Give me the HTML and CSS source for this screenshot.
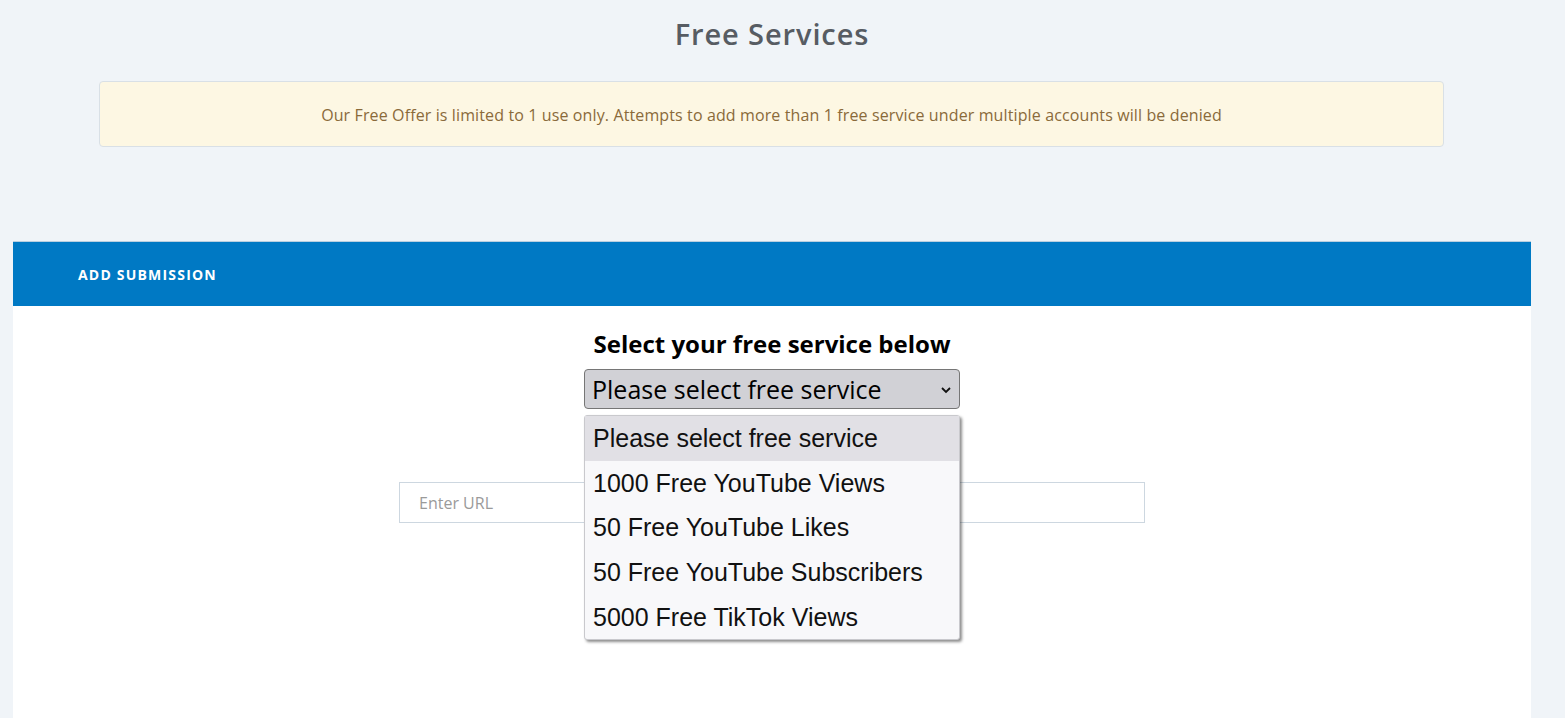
FILE: index.html
```html
<!DOCTYPE html>
<html lang="en">
<head>
    <meta charset="UTF-8">
    <meta name="viewport" content="width=device-width, initial-scale=1.0">
    <title>Free Services</title>
    <link rel="stylesheet" href="styles.css">
</head>
<body>
    <h2 class="page-title">Free Services</h2>

    <div class="alert">
        Our Free Offer is limited to 1 use only. Attempts to add more than 1 free service under multiple accounts will be denied
    </div>

    <div class="card">
        <div class="card-header">ADD SUBMISSION</div>
        <div class="card-body">
            <h3 class="select-label">Select your free service below</h3>
            <div class="select-wrap">
                <div class="select">
                    <span>Please select free service</span>
                    <svg class="chevron" width="12" height="8" viewBox="0 0 12 8">
                        <path d="M2 2 L6 6 L10 2" fill="none" stroke="#111" stroke-width="1.8"/>
                    </svg>
                </div>
                <ul class="options">
                    <li class="active">Please select free service</li>
                    <li>1000 Free YouTube Views</li>
                    <li>50 Free YouTube Likes</li>
                    <li>50 Free YouTube Subscribers</li>
                    <li>5000 Free TikTok Views</li>
                </ul>
            </div>
            <input type="text" class="url-input" placeholder="Enter URL">
        </div>
    </div>
</body>
</html>
```

FILE: styles.css
```css
body {
    margin: 0;
    background-color: #f0f4f8;
    font-family: "Open Sans", "Noto Sans", sans-serif;
}

.page-title {
    margin: 0;
    padding: 14px 21px 0 0;
    line-height: 40px;
    font-size: 29px;
    font-weight: 600;
    color: #575c63;
    text-align: center;
    letter-spacing: 0.9px;
}

.alert {
    margin: 27px 121px 0 99px;
    display: flex;
    align-items: center;
    justify-content: center;
    padding-top: 2px;
    height: 62px;
    background-color: #fdf7e3;
    border: 1px solid #d9e0e6;
    border-radius: 4px;
    color: #8a6a3a;
    font-size: 16px;
    letter-spacing: 0.12px;
}

.card {
    margin: 94px 34px 0 13px;
    background-color: #ffffff;
}

.card-header {
    height: 65px;
    display: flex;
    align-items: center;
    padding-left: 65px;
    background-color: #0079c4;
    border-top: 1px solid #b9cfe0;
    box-sizing: border-box;
    color: #ffffff;
    font-size: 14px;
    font-weight: 700;
    letter-spacing: 1.2px;
}

.card-body {
    display: flex;
    flex-direction: column;
    align-items: center;
    padding: 22px 0 200px;
}

.select-label {
    margin: 0;
    line-height: 32px;
    font-size: 24px;
    font-weight: 700;
    color: #000000;
}

.select-wrap {
    position: relative;
    margin-top: 9px;
}

.select {
    width: 376px;
    height: 40px;
    box-sizing: border-box;
    display: flex;
    align-items: center;
    justify-content: space-between;
    padding: 0 7px 0 7px;
    background-color: #d1d1d6;
    border: 1px solid #767676;
    border-radius: 4px;
    font-size: 25px;
    color: #000000;
}

.chevron {
    margin-top: 2px;
}

.options {
    position: absolute;
    top: 46px;
    left: 0;
    width: 376px;
    margin: 0;
    padding: 0;
    list-style: none;
    box-sizing: border-box;
    background-color: #f8f8fa;
    border: 1px solid #c9c9cd;
    border-radius: 3px;
    box-shadow: 2px 2px 3px rgba(0, 0, 0, 0.45);
    font-family: "Liberation Sans", Arial, sans-serif;
    font-size: 25px;
    color: #111111;
    z-index: 2;
}

.options li {
    height: 44.7px;
    line-height: 44.7px;
    padding-left: 8px;
}

.options li.active {
    background-color: #e1e0e5;
}

.url-input {
    margin-top: 73px;
    width: 746px;
    height: 41px;
    box-sizing: border-box;
    padding: 0 19px;
    border: 1px solid #cdd7e0;
    font-family: "Open Sans", sans-serif;
    font-size: 16px;
    outline: none;
}

.url-input::placeholder {
    color: #9a9a9a;
}
```
